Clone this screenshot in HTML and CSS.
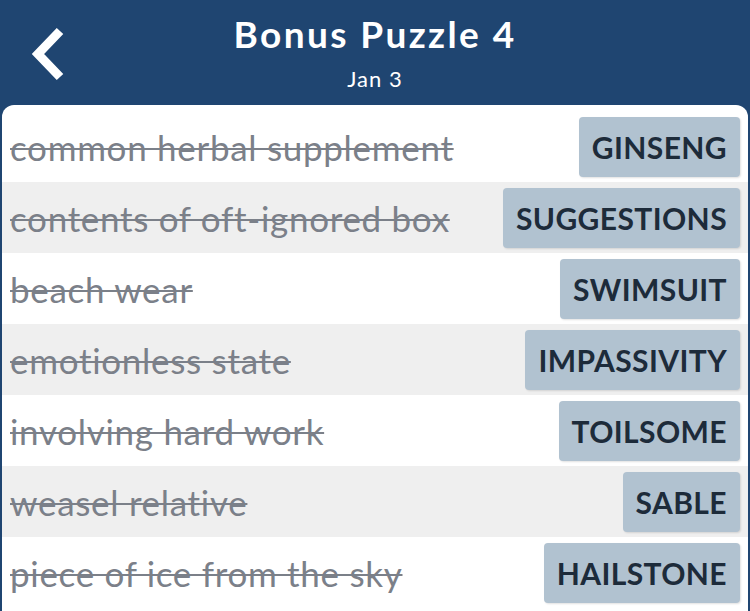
FILE: index.html
```html
<!DOCTYPE html>
<html lang="en">
<head>
  <meta charset="UTF-8">
  <meta name="viewport" content="width=device-width, initial-scale=1.0">
  <title>Bonus Puzzle 4</title>
  <link rel="stylesheet" href="styles.css">
</head>
<body>
  <div class="header">
    <div class="back">
      <svg width="40" height="56" viewBox="0 0 40 56">
        <polyline points="30,5 8,28 30,51" fill="none" stroke="#fff" stroke-width="9" stroke-linecap="butt" stroke-linejoin="miter"/>
      </svg>
    </div>
    <div class="titles">
      <div class="title">Bonus Puzzle 4</div>
      <div class="date">Jan 3</div>
    </div>
    <div></div>
  </div>
  <div class="card">
    <div class="row">
      <span class="clue">common herbal supplement</span>
      <span class="answer">GINSENG</span>
    </div>
    <div class="row">
      <span class="clue">contents of oft-ignored box</span>
      <span class="answer">SUGGESTIONS</span>
    </div>
    <div class="row">
      <span class="clue">beach wear</span>
      <span class="answer">SWIMSUIT</span>
    </div>
    <div class="row">
      <span class="clue">emotionless state</span>
      <span class="answer">IMPASSIVITY</span>
    </div>
    <div class="row">
      <span class="clue">involving hard work</span>
      <span class="answer">TOILSOME</span>
    </div>
    <div class="row">
      <span class="clue">weasel relative</span>
      <span class="answer">SABLE</span>
    </div>
    <div class="row">
      <span class="clue">piece of ice from the sky</span>
      <span class="answer">HAILSTONE</span>
    </div>
  </div>
</body>
</html>
```

FILE: styles.css
```css
body {
  font-family: Lato, "Open Sans", sans-serif;
  background-color: #1f4571;
  margin: 0;
  padding: 0;
  height: 611px;
  overflow: hidden;
}

.header {
  height: 105px;
  display: grid;
  grid-template-columns: 100px 1fr 100px;
  align-items: center;
  color: #fff;
}

.back {
  padding-left: 30px;
  padding-top: 2px;
  display: flex;
}

.titles {
  text-align: center;
  padding-bottom: 0;
}

.title {
  font-size: 37px;
  font-weight: 700;
  letter-spacing: 2.4px;
  line-height: 42px;
}

.date {
  font-size: 22px;
  letter-spacing: 1px;
  line-height: 28px;
  margin-top: 10px;
}

.card {
  background-color: #fff;
  margin: 0 2px;
  border-radius: 12px 12px 0 0;
  padding-top: 6px;
  height: 500px;
}

.row {
  height: 71px;
  display: flex;
  align-items: center;
  justify-content: space-between;
  padding: 0 8px 0 8px;
}

.row:nth-child(even) {
  background-color: #efefef;
}

.clue {
  font-size: 35px;
  letter-spacing: 0.7px;
  color: #7b8089;
  text-decoration: line-through;
  text-decoration-thickness: 2px;
}

.answer {
  background-color: #b1c2d0;
  color: #1d2b3a;
  font-size: 30px;
  font-weight: 700;
  letter-spacing: 0.4px;
  height: 60px;
  display: flex;
  align-items: center;
  padding: 0 13px;
  border-radius: 4px;
  box-shadow: 1px 1px 2px rgba(0, 0, 0, 0.12);
}
```
